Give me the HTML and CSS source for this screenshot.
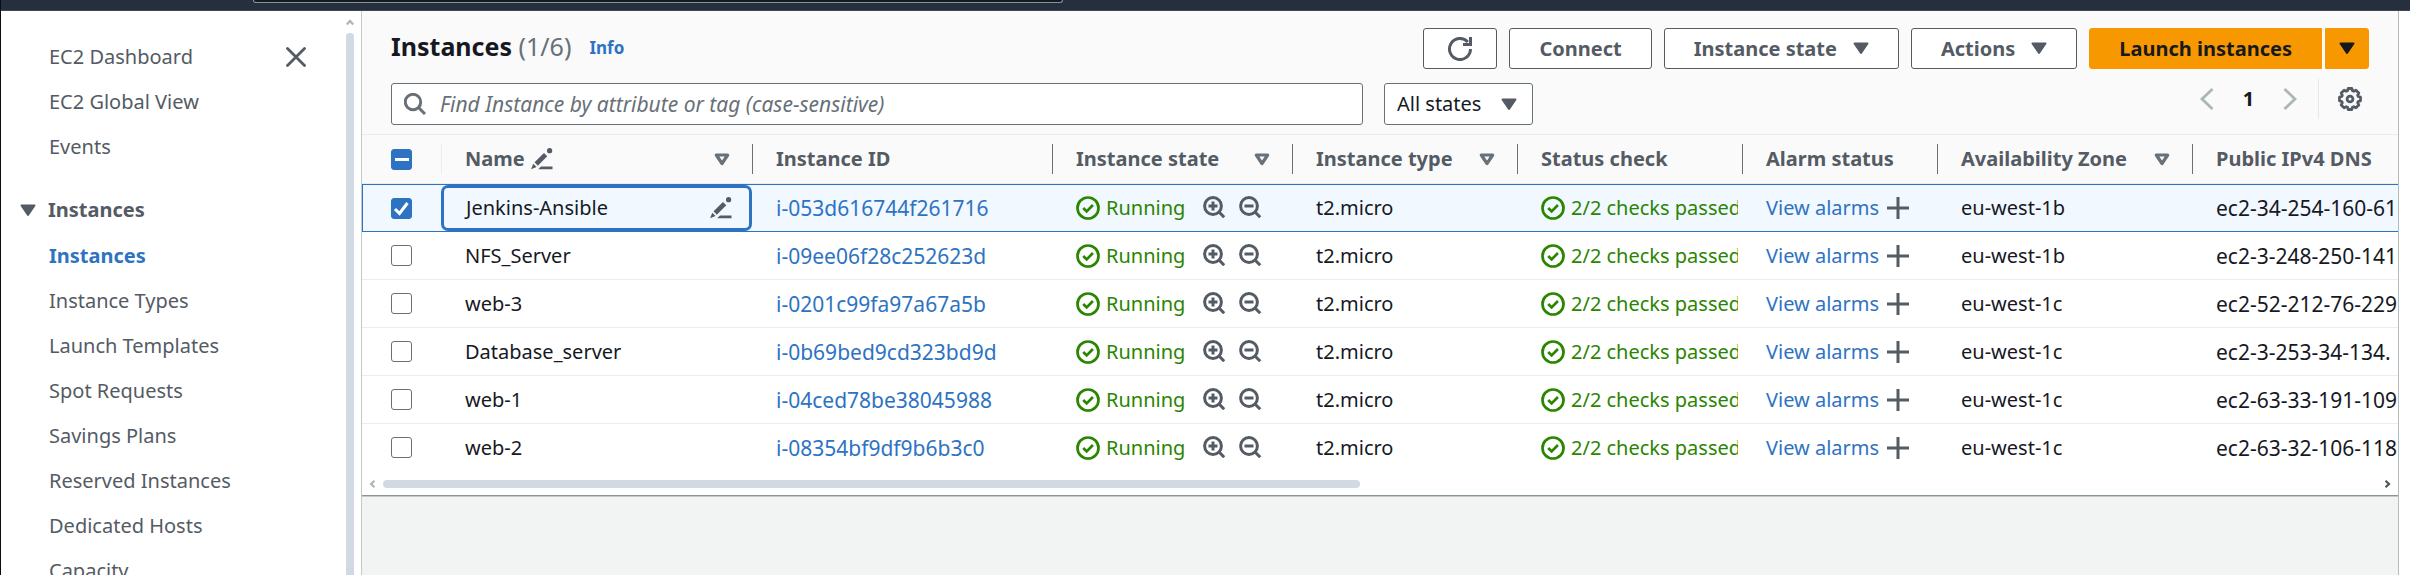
FILE: index.html
```html
<!DOCTYPE html>
<html lang="en">
<head>
<meta charset="utf-8">
<title>Instances | EC2</title>
<link rel="stylesheet" href="styles.css">
</head>
<body>
<svg class="sprite" aria-hidden="true">
  <symbol id="ok" viewBox="0 0 16 16"><circle cx="8" cy="8" r="7" fill="none" stroke="currentColor" stroke-width="1.8"/><path d="M4.8 8l2.3 2.3 4.2-4.3" fill="none" stroke="currentColor" stroke-width="1.8"/></symbol>
  <symbol id="zin" viewBox="0 0 22 22"><circle cx="10" cy="10" r="8.4" fill="none" stroke="currentColor" stroke-width="3"/><path d="M15.8 15.8l5.4 5.4M5.5 10h9M10 5.5v9" fill="none" stroke="currentColor" stroke-width="3"/></symbol>
  <symbol id="zout" viewBox="0 0 22 22"><circle cx="10" cy="10" r="8.4" fill="none" stroke="currentColor" stroke-width="3"/><path d="M15.8 15.8l5.4 5.4M5.5 10h9" fill="none" stroke="currentColor" stroke-width="3"/></symbol>
  <symbol id="plus" viewBox="0 0 22 22"><path d="M0 11h22M11 0v22" fill="none" stroke="currentColor" stroke-width="3"/></symbol>
  <symbol id="pen" viewBox="0 0 22 22"><path d="M5.200 16L14.600 6.600" stroke="currentColor" stroke-width="4.600"/><path d="M0 21.200l2.300-5.400 3.300 3.300zM10 18.400H21.500v2.800H7.200z" fill="currentColor"/><circle cx="18.600" cy="2.700" r="2.600" fill="currentColor"/></symbol>
  <symbol id="down" viewBox="0 0 16 13"><path d="M1.500 1.500h13L8 11z" fill="currentColor" stroke="currentColor" stroke-width="2" stroke-linejoin="round"/></symbol>
  <symbol id="sort" viewBox="0 0 16 13"><path d="M2.300 2h11.400L8 10.500z" fill="none" stroke="currentColor" stroke-width="3.200" stroke-linejoin="round"/></symbol>
</svg>

<header class="topbar"><div class="topbar-search"></div></header>

<div class="layout">
  <aside class="sidebar">
    <nav class="nav">
      <ul>
        <li><a href="#">EC2 Dashboard</a></li>
        <li><a href="#">EC2 Global View</a></li>
        <li><a href="#">Events</a></li>
      </ul>
      <button class="section" type="button"><svg class="caret"><use href="#down"/></svg>Instances</button>
      <ul>
        <li><a class="active" href="#">Instances</a></li>
        <li><a href="#">Instance Types</a></li>
        <li><a href="#">Launch Templates</a></li>
        <li><a href="#">Spot Requests</a></li>
        <li><a href="#">Savings Plans</a></li>
        <li><a href="#">Reserved Instances</a></li>
        <li><a href="#">Dedicated Hosts</a></li>
        <li><a href="#">Capacity</a></li>
      </ul>
    </nav>
    <button class="close" type="button" aria-label="Close navigation"><svg viewBox="0 0 20 20"><path d="M1.500 1.500l17 17M18.500 1.500l-17 17" stroke="currentColor" stroke-width="2.800" stroke-linecap="round"/></svg></button>
    <div class="vscroll"><svg viewBox="0 0 8 6"><path d="M.8 5.500L4 2l3.200 3.500" fill="none" stroke="#b3b3b3" stroke-width="2.200"/></svg><div class="vthumb"></div></div>
  </aside>

  <main class="main">
    <section class="head">
      <div class="title-row">
        <h1>Instances <span>(1/6)</span></h1>
        <a class="info" href="#">Info</a>
        <div class="actions">
          <button class="btn refresh" type="button" aria-label="Refresh"><svg viewBox="0 0 24 24"><path d="M22.500 12A10.500 10.500 0 1 1 19.800 5" fill="none" stroke="currentColor" stroke-width="3"/><path d="M22.500 0v7.500H15" fill="none" stroke="currentColor" stroke-width="3"/></svg></button>
          <button class="btn" type="button">Connect</button>
          <button class="btn" type="button">Instance state<svg class="caret"><use href="#down"/></svg></button>
          <button class="btn" type="button">Actions<svg class="caret"><use href="#down"/></svg></button>
          <div class="split">
            <button class="btn primary" type="button">Launch instances</button>
            <button class="btn primary more" type="button" aria-label="More launch options"><svg class="caret"><use href="#down"/></svg></button>
          </div>
        </div>
      </div>
      <div class="filter-row">
        <label class="search">
          <svg viewBox="0 0 22 22"><circle cx="9" cy="9" r="7.700" fill="none" stroke="currentColor" stroke-width="3"/><path d="M14.500 14.500l6.500 6.500" stroke="currentColor" stroke-width="3"/></svg>
          <input type="text" aria-label="Find Instance" placeholder="Find Instance by attribute or tag (case-sensitive)">
        </label>
        <label class="states">
          <select aria-label="Instance states"><option>All states</option></select>
          <svg class="caret"><use href="#down"/></svg>
        </label>
        <div class="pager">
          <button class="page-arrow" type="button" aria-label="Previous page"><svg viewBox="0 0 14 22"><path d="M12.500 1L2 11l10.500 10" fill="none" stroke="currentColor" stroke-width="2.800"/></svg></button>
          <button class="page" type="button">1</button>
          <button class="page-arrow" type="button" aria-label="Next page"><svg viewBox="0 0 14 22"><path d="M1.500 1L12 11 1.500 21" fill="none" stroke="currentColor" stroke-width="2.800"/></svg></button>
          <button class="gear" type="button" aria-label="Preferences"><svg viewBox="0 0 24 24" fill="none" stroke="currentColor"><path stroke-width="2.800" stroke-linejoin="round" d="M10.200 1.500h3.600l.7 2.300 1.300.5 2.100-1.100 2.900 2.900-1.100 2.100.5 1.300 2.300.7v3.600l-2.300.7-.5 1.300 1.100 2.100-2.900 2.900-2.100-1.100-1.300.5-.7 2.300h-3.600l-.7-2.300-1.300-.5-2.100 1.100-2.900-2.900 1.100-2.100-.5-1.300-2.300-.7v-3.600l2.300-.7.5-1.300-1.100-2.100 2.900-2.900 2.100 1.100 1.300-.5z"/><circle cx="12" cy="12" r="2.900" stroke-width="2.800"/></svg></button>
        </div>
      </div>
    </section>

    <table class="grid">
      <colgroup><col class="c-check"><col class="c-name"><col class="c-id"><col class="c-state"><col class="c-type"><col class="c-status"><col class="c-alarm"><col class="c-az"><col></colgroup>
      <thead>
        <tr>
          <th class="check"><input class="box some" type="checkbox" aria-label="Select all"></th>
          <th><div class="th">Name<svg class="i22"><use href="#pen"/></svg><svg class="caret sort"><use href="#sort"/></svg></div></th>
          <th><div class="th">Instance ID</div></th>
          <th><div class="th">Instance state<svg class="caret sort"><use href="#sort"/></svg></div></th>
          <th><div class="th">Instance type<svg class="caret sort"><use href="#sort"/></svg></div></th>
          <th><div class="th">Status check</div></th>
          <th><div class="th">Alarm status</div></th>
          <th><div class="th">Availability Zone<svg class="caret sort"><use href="#sort"/></svg></div></th>
          <th><div class="th">Public IPv4 DNS</div></th>
        </tr>
      </thead>
      <tbody>
        <tr class="selected">
          <td class="check"><input class="box" type="checkbox" checked aria-label="Select Jenkins-Ansible"></td>
          <td class="editing"><div class="cell spread">Jenkins-Ansible<svg class="i22"><use href="#pen"/></svg></div></td>
          <td class="code"><a href="#">i-053d616744f261716</a></td>
          <td><div class="cell"><svg class="i24 ok"><use href="#ok"/></svg><span class="ok">Running</span><svg class="i22 zin"><use href="#zin"/></svg><svg class="i22 zout"><use href="#zout"/></svg></div></td>
          <td>t2.micro</td>
          <td class="status"><div class="cell ok"><svg class="i24"><use href="#ok"/></svg><span>2/2 checks passed</span></div></td>
          <td><div class="cell"><a href="#">View alarms</a><svg class="i22"><use href="#plus"/></svg></div></td>
          <td>eu-west-1b</td><td class="code">ec2-34-254-160-61</td>
        </tr>
        <tr>
          <td class="check"><input class="box" type="checkbox" aria-label="Select NFS_Server"></td>
          <td>NFS_Server</td>
          <td class="code"><a href="#">i-09ee06f28c252623d</a></td>
          <td><div class="cell"><svg class="i24 ok"><use href="#ok"/></svg><span class="ok">Running</span><svg class="i22 zin"><use href="#zin"/></svg><svg class="i22 zout"><use href="#zout"/></svg></div></td>
          <td>t2.micro</td>
          <td class="status"><div class="cell ok"><svg class="i24"><use href="#ok"/></svg><span>2/2 checks passed</span></div></td>
          <td><div class="cell"><a href="#">View alarms</a><svg class="i22"><use href="#plus"/></svg></div></td>
          <td>eu-west-1b</td><td class="code">ec2-3-248-250-141</td>
        </tr>
        <tr>
          <td class="check"><input class="box" type="checkbox" aria-label="Select web-3"></td>
          <td>web-3</td>
          <td class="code"><a href="#">i-0201c99fa97a67a5b</a></td>
          <td><div class="cell"><svg class="i24 ok"><use href="#ok"/></svg><span class="ok">Running</span><svg class="i22 zin"><use href="#zin"/></svg><svg class="i22 zout"><use href="#zout"/></svg></div></td>
          <td>t2.micro</td>
          <td class="status"><div class="cell ok"><svg class="i24"><use href="#ok"/></svg><span>2/2 checks passed</span></div></td>
          <td><div class="cell"><a href="#">View alarms</a><svg class="i22"><use href="#plus"/></svg></div></td>
          <td>eu-west-1c</td><td class="code">ec2-52-212-76-229</td>
        </tr>
        <tr>
          <td class="check"><input class="box" type="checkbox" aria-label="Select Database_server"></td>
          <td>Database_server</td>
          <td class="code"><a href="#">i-0b69bed9cd323bd9d</a></td>
          <td><div class="cell"><svg class="i24 ok"><use href="#ok"/></svg><span class="ok">Running</span><svg class="i22 zin"><use href="#zin"/></svg><svg class="i22 zout"><use href="#zout"/></svg></div></td>
          <td>t2.micro</td>
          <td class="status"><div class="cell ok"><svg class="i24"><use href="#ok"/></svg><span>2/2 checks passed</span></div></td>
          <td><div class="cell"><a href="#">View alarms</a><svg class="i22"><use href="#plus"/></svg></div></td>
          <td>eu-west-1c</td><td class="code">ec2-3-253-34-134.</td>
        </tr>
        <tr>
          <td class="check"><input class="box" type="checkbox" aria-label="Select web-1"></td>
          <td>web-1</td>
          <td class="code"><a href="#">i-04ced78be38045988</a></td>
          <td><div class="cell"><svg class="i24 ok"><use href="#ok"/></svg><span class="ok">Running</span><svg class="i22 zin"><use href="#zin"/></svg><svg class="i22 zout"><use href="#zout"/></svg></div></td>
          <td>t2.micro</td>
          <td class="status"><div class="cell ok"><svg class="i24"><use href="#ok"/></svg><span>2/2 checks passed</span></div></td>
          <td><div class="cell"><a href="#">View alarms</a><svg class="i22"><use href="#plus"/></svg></div></td>
          <td>eu-west-1c</td><td class="code">ec2-63-33-191-109</td>
        </tr>
        <tr>
          <td class="check"><input class="box" type="checkbox" aria-label="Select web-2"></td>
          <td>web-2</td>
          <td class="code"><a href="#">i-08354bf9df9b6b3c0</a></td>
          <td><div class="cell"><svg class="i24 ok"><use href="#ok"/></svg><span class="ok">Running</span><svg class="i22 zin"><use href="#zin"/></svg><svg class="i22 zout"><use href="#zout"/></svg></div></td>
          <td>t2.micro</td>
          <td class="status"><div class="cell ok"><svg class="i24"><use href="#ok"/></svg><span>2/2 checks passed</span></div></td>
          <td><div class="cell"><a href="#">View alarms</a><svg class="i22"><use href="#plus"/></svg></div></td>
          <td>eu-west-1c</td><td class="code">ec2-63-32-106-118</td>
        </tr>
      </tbody>
    </table>
    <div class="hscroll">
      <svg viewBox="0 0 6 8"><path d="M5.500.8L2 4l3.500 3.200" fill="none" stroke="#b3b3b3" stroke-width="2.200"/></svg>
      <div class="htrack"><div class="hthumb"></div></div>
      <svg viewBox="0 0 6 8"><path d="M.5.8L4 4 .5 7.200" fill="none" stroke="#555" stroke-width="2.200"/></svg>
    </div>
    <div class="rest"></div>
  </main>
</div>
</body>
</html>
```
FILE: styles.css
```css
* { box-sizing: border-box; }

body {
  margin: 0;
  height: 100vh;
  display: flex;
  flex-direction: column;
  overflow: hidden;
  border-left: 1px solid #0b0b18;
  background: #fff;
  color: #16191f;
  font: 20px/30px "Noto Sans", "Open Sans", sans-serif;
}

a { color: #2e73c2; text-decoration: none; }
button, input, select { font: inherit; color: inherit; }
button { padding: 0; border: 0; background: none; }
svg { display: block; flex: none; }
.sprite { position: absolute; width: 0; height: 0; }

.caret { width: 16px; height: 13px; }
.i22 { width: 22px; height: 22px; color: #545b64; }
.i24 { width: 24px; height: 24px; }
.ok { color: #2b8500; }

.topbar {
  flex: none;
  height: 11px;
  padding: 0 1347px 0 252px;
  background: #262f3e;
  border-bottom: 1px solid #414750;
}
.topbar-search {
  height: 3px;
  background: #16191f;
  border: 1px solid #879596;
  border-top: 0;
  border-radius: 0 0 3px 3px;
}

.layout { flex: 1; display: flex; min-height: 0; padding-right: 11px; }

.sidebar {
  flex: none;
  width: 360px;
  display: flex;
  align-items: flex-start;
  padding-right: 7px;
  color: #545b64;
}
.nav { flex: 1; padding: 31px 0 0 19px; }
.nav ul { display: grid; gap: 15px; margin: 0; padding: 0 0 0 29px; list-style: none; }
.nav a { color: inherit; }
.nav a.active { color: #2e73c2; font-weight: 700; }
.section {
  display: flex;
  align-items: center;
  gap: 12px;
  margin: 33px 0 16px;
  font-weight: 700;
}
.close { margin: 36px 32px 0 0; color: #545b64; }
.close svg { width: 20px; height: 20px; }
.vscroll {
  align-self: stretch;
  width: 8px;
  margin-left: 8px;
  padding-top: 8px;
  display: flex;
  flex-direction: column;
  gap: 8px;
}
.vscroll svg { width: 8px; height: 6px; }
.vthumb { flex: 1; background: #d1d9e3; border-radius: 4px 4px 0 0; }

.main {
  flex: 1;
  min-width: 0;
  display: flex;
  flex-direction: column;
  border-left: 1px solid #c4caca;
  border-right: 1px solid #b4bcbc;
}

.head { padding: 17px 29px 9px; background: #fafafa; border-bottom: 1px solid #eaeded; }
.title-row { display: flex; align-items: flex-start; }
h1 { margin: 0; font-size: 25px; line-height: 36px; }
h1 span { font-weight: 400; color: #687078; }
.info { margin: 5px 0 0 18px; font-size: 17px; font-weight: 700; }
.actions { display: flex; gap: 12px; margin-left: auto; }
.btn {
  display: flex;
  align-items: center;
  gap: 16px;
  height: 41px;
  padding: 0 29px;
  border: 1px solid #545b64;
  border-radius: 3px;
  background: #fff;
  color: #545b64;
  font-weight: 700;
}
.refresh { padding: 0 24px; }
.refresh svg { width: 24px; height: 24px; }
.split { display: flex; gap: 3px; }
.primary { background: #f79800; border-color: #f79800; color: #16191f; border-radius: 3px 0 0 3px; }
.more { padding: 0 13px; border-radius: 0 3px 3px 0; }

.filter-row { display: flex; align-items: flex-start; padding-top: 14px; }
.search {
  flex: 0 1 972px;
  display: flex;
  align-items: center;
  gap: 14px;
  height: 42px;
  padding-left: 12px;
  border: 1px solid #687078;
  border-radius: 3px;
  background: #fff;
  color: #687078;
}
.search svg { width: 22px; height: 22px; }
.search input { flex: 1; border: 0; padding: 0; background: none; outline: 0; font-size: 21px; }
.search input::placeholder { color: #687078; font-style: italic; opacity: 1; }
.states {
  flex: none;
  display: grid;
  align-items: center;
  width: 149px;
  margin-left: 21px;
}
.states > * { grid-area: 1 / 1; }
.states select {
  height: 42px;
  padding: 0 12px;
  border: 1px solid #687078;
  border-radius: 3px;
  background: #fff;
  appearance: none;
}
.states .caret { justify-self: end; margin-right: 16px; color: #545b64; pointer-events: none; }
.pager { display: flex; align-items: center; height: 32px; margin-left: auto; }
.page-arrow { color: #aab7b8; }
.page-arrow svg { width: 14px; height: 22px; }
.page { width: 69px; font-weight: 700; }
.gear {
  height: 40px;
  margin-left: 21px;
  padding: 0 7px 0 19px;
  border-left: 1px solid #e4e8e8;
  color: #545b64;
}
.gear svg { width: 24px; height: 24px; }

.grid { width: 100%; table-layout: fixed; border-collapse: separate; border-spacing: 0; }
.c-check { width: 79px; }
.c-name { width: 311px; }
.c-id { width: 300px; }
.c-state { width: 240px; }
.c-type, .c-status { width: 225px; }
.c-alarm { width: 195px; }
.c-az { width: 255px; }
th, td { padding: 0 0 0 24px; text-align: left; white-space: nowrap; overflow: hidden; }
th { height: 49px; padding-left: 0; background: #fafafa; color: #545b64; border-bottom: 1px solid #eaeded; }
.check { padding-left: 29px; }
.th {
  display: flex;
  align-items: center;
  gap: 6px;
  height: 30px;
  padding: 0 22px 0 23px;
  border-left: 1px solid #687078;
}
th:nth-child(2) .th { border-left-color: #eaeded; }
.sort { margin-left: auto; color: #687078; }
td { height: 48px; border-bottom: 1px solid #eaeded; }
tbody tr:last-child td { border-bottom-color: transparent; }
.code { font-size: 21px; }
.selected td { background: #f1f8ff; border-top: 1px solid #2e73c2; border-bottom-color: #2e73c2; }
.selected td:first-child { border-left: 1px solid #2e73c2; padding-left: 28px; }
.selected td.editing { padding: 0; }
.editing .cell {
  height: 46px;
  padding: 0 17px 0 22px;
  border: 3px solid #2e73c2;
  border-radius: 7px;
}
.cell { display: flex; align-items: center; gap: 6px; }
.status { padding-right: 4px; }
.status .cell { overflow: hidden; }
.spread { justify-content: space-between; }
.cell a + .i22 { margin-left: 2px; }
.zin { margin: -2px 0 0 12px; }
.zout { margin: -2px 0 0 8px; }
.box {
  display: block;
  width: 21px;
  height: 21px;
  margin: 0;
  appearance: none;
  border: 1px solid #687078;
  border-radius: 3px;
  background: #fff center / 21px 21px no-repeat;
}
.box:checked, .some { background-color: #2e73c2; border-color: #2e73c2; }
.box:checked { background-image: url("data:image/svg+xml,%3Csvg xmlns='http://www.w3.org/2000/svg' viewBox='0 0 21 21'%3E%3Cpath d='M4 11l4.500 4.500L16.500 5' fill='none' stroke='white' stroke-width='3'/%3E%3C/svg%3E"); }
.some { background-image: linear-gradient(#fff, #fff); background-size: 14px 3px; }

.hscroll { display: flex; align-items: center; gap: 8px; height: 24px; padding: 0 7px; border-bottom: 1px solid #879596; }
.hscroll svg { width: 6px; height: 8px; }
.htrack { flex: 1; }
.hthumb { width: 49%; height: 8px; border-radius: 4px; background: #d1d9e3; }
.rest { flex: 1; background: #f2f3f3; border-top: 1px solid #c4caca; }
```
